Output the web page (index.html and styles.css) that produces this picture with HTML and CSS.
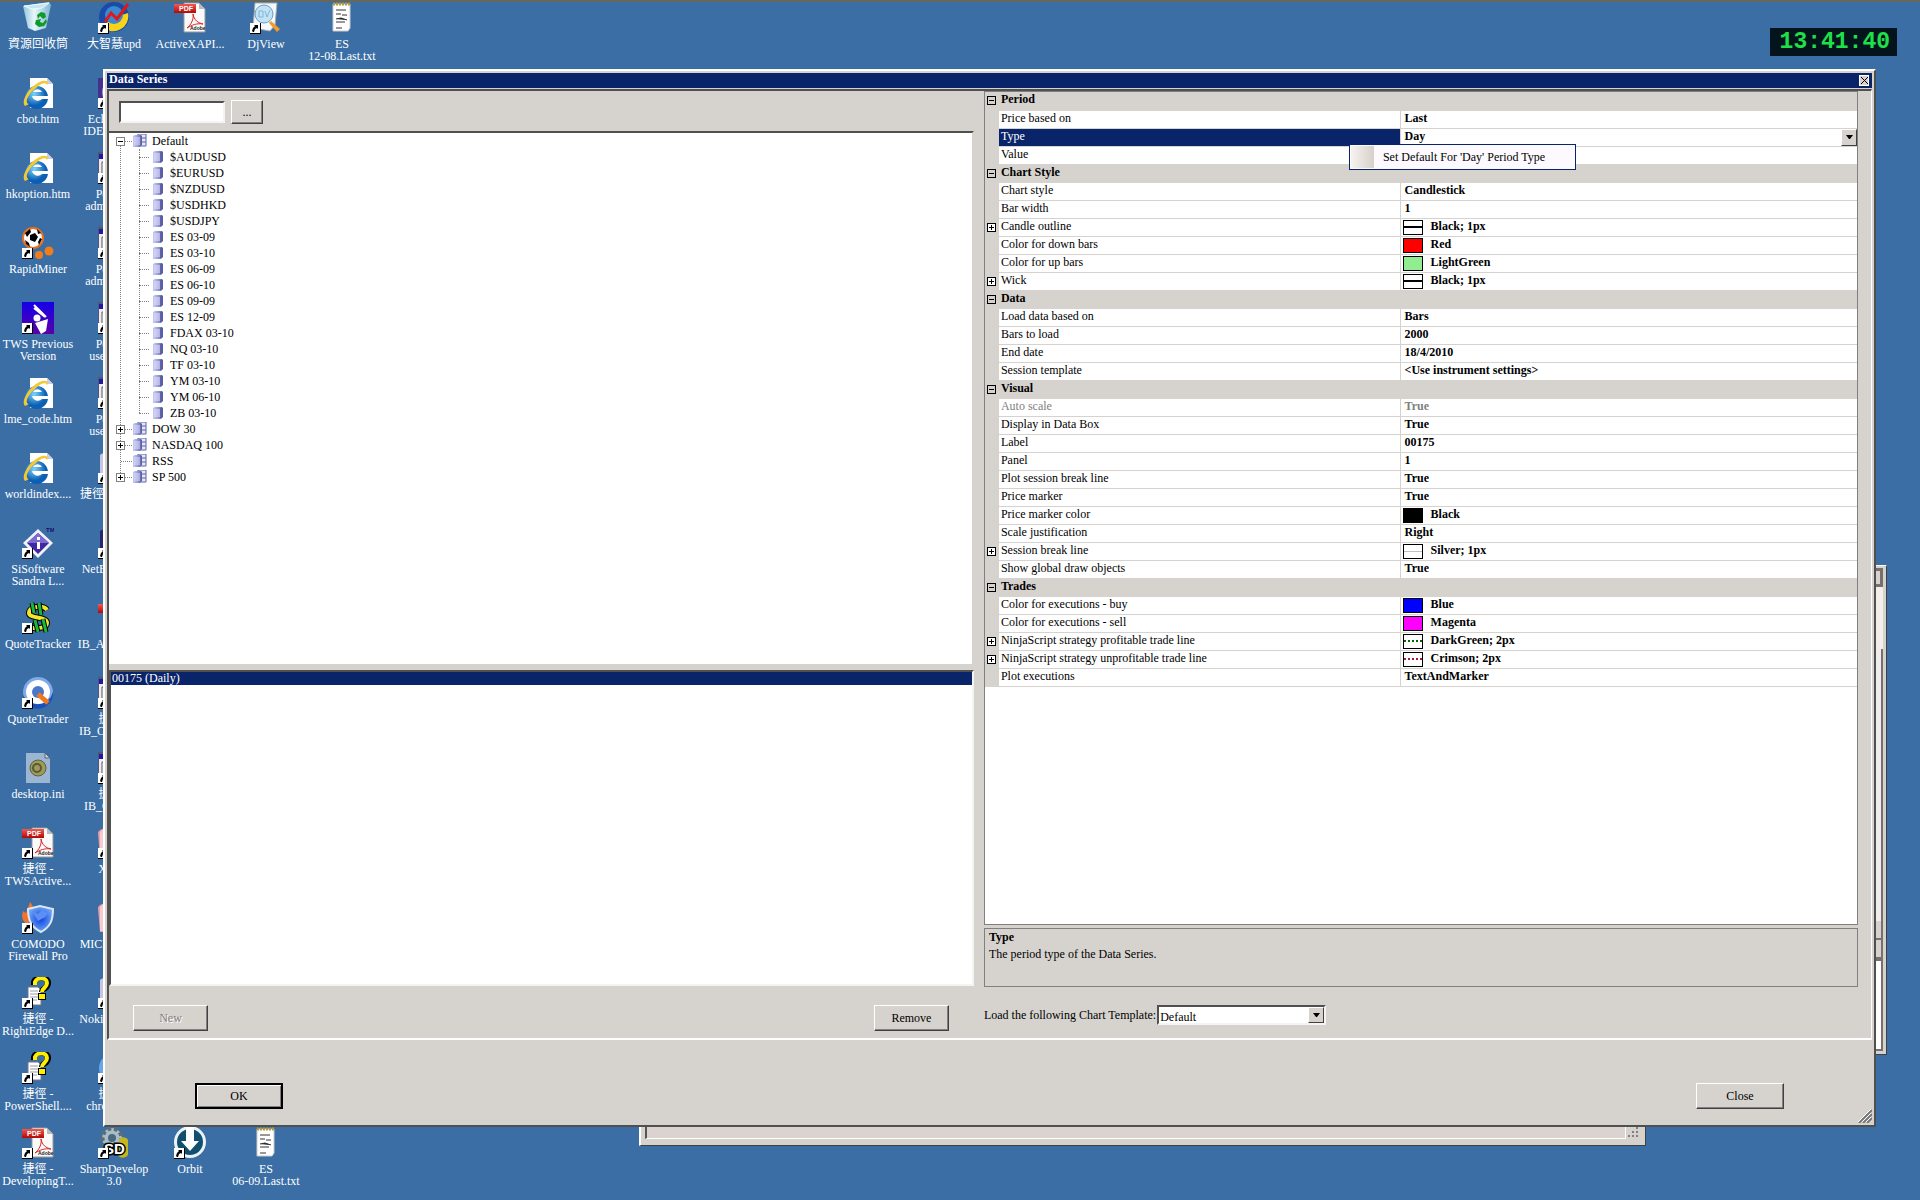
FILE: index.html
```html
<!DOCTYPE html>
<html lang="zh-Hant">
<head>
<meta charset="utf-8">
<title>Data Series</title>
<link rel="stylesheet" href="styles.css">
</head>
<body>
<svg class="defs" aria-hidden="true">
  <defs>
    <linearGradient id="gDb" x1="0" x2="1"><stop offset="0" stop-color="#c9cbf2"/><stop offset=".5" stop-color="#9a9edb"/><stop offset="1" stop-color="#5558a0"/></linearGradient>
    <linearGradient id="gRed" x1="0" x2="0" y1="0" y2="1"><stop offset="0" stop-color="#f05a50"/><stop offset="1" stop-color="#b00808"/></linearGradient>
    <radialGradient id="gIe" cx=".4" cy=".35"><stop offset="0" stop-color="#7fd4fb"/><stop offset="1" stop-color="#0b5fb4"/></radialGradient>
    <radialGradient id="gShield"><stop offset="0" stop-color="#1240e0"/><stop offset="1" stop-color="#6aa4f5"/></radialGradient>
    <linearGradient id="gBin" x1="0" x2="1"><stop offset="0" stop-color="#8fc4dc"/><stop offset=".4" stop-color="#e8f6fb"/><stop offset="1" stop-color="#7fb6d4"/></linearGradient>
    <linearGradient id="gTws" x1="0" x2="0" y1="0" y2="1"><stop offset="0" stop-color="#1400e8"/><stop offset="1" stop-color="#5a00a8"/></linearGradient>
  </defs>
  <symbol id="link" viewBox="0 0 11 11"><path d="M0 0h11v11H0z" fill="#000"/><path d="M0 0h10v10H0z" fill="#fff"/><path d="M4 2h4v4L7 5 5 6 4 9H3L2 8l1-3 2-2z" fill="#000"/></symbol>
  <symbol id="bin" viewBox="0 0 32 32"><path d="M1 4 27 0l2 3-5 23-11 3-7-3z" fill="url(#gBin)"/><path d="M2 4 27 1l-7 5-10 1z" fill="#c5e4ef" stroke="#eefaff"/><path d="m15 13 4-3 4 1 1 4-3 2-3-3-2 3zM14 18l5-1-1 3 3 1 3-4 1 3-3 4-5 1-4-3z" fill="#109a28"/></symbol>
  <symbol id="stock" viewBox="0 0 32 32"><circle cx="16" cy="15" r="15" fill="#1a4ba8"/><path d="M30 11a15 15 0 0 1-26 13l6-4 9-1 5-6z" fill="#f7d418"/><circle cx="16" cy="13" r="9" fill="#3a8ad0"/><path d="m7 20 6-9 6 6L30 2" fill="none" stroke="#e01818" stroke-width="3"/></symbol>
  <symbol id="pdf" viewBox="0 0 32 32"><path d="M10 1h15l6 6v23H10z" fill="#fafafa" stroke="#999"/><path d="M25 1v6h6z" fill="#bbb"/><path d="M13 26c4-3 7-9 6-14 1 6 5 9 10 10-6-1-11 1-16 4z" fill="none" stroke="#e02020"/><path d="M0 2h22v9H0z" fill="url(#gRed)"/><text x="5" y="9" class="icon-pdf">PDF</text><text x="16" y="28" class="icon-adobe">Adobe</text></symbol>
  <symbol id="djview" viewBox="0 0 32 32"><path d="M5 1h22l-2 22-5 6L3 26z" fill="#f4f7fb" stroke="#aaa"/><path d="m21 19 9 8-3 3-8-9z" fill="#f29c2a"/><circle cx="14" cy="12" r="9" fill="#c2e2f5" stroke="#6b9fc4"/><path d="M9 9h4v6H9zm6 0 2 6 3-7" fill="none" stroke="#86b4d8"/></symbol>
  <symbol id="note" viewBox="0 0 32 32"><path d="M7 2h17v24l-2 3H7z" fill="#fff" stroke="#ccc"/><path d="M7 2h17" stroke="#b39b38" stroke-width="3" stroke-dasharray="2 1"/><path d="M10 8h10M10 12h5m1 1h5M10 17l5-1 6 2M10 20h9M10 26h6" stroke="#333"/></symbol>
  <symbol id="ie" viewBox="0 0 32 32"><path d="M8 1h17l6 6v24H8z" fill="#fff"/><path d="M25 1v6h6z" fill="#ccd"/><path d="M26 19H10a6 6 0 0 0 10 3h6A11.500 11.500 0 1 1 26 19zm-6-4a5 5 0 0 0-9 0z" fill="url(#gIe)"/><path d="M3 29C-2 24 8 8 20 4c5-1 7 1 5 4-1-3-6-2-11 3C6 17 2 26 7 27z" fill="#f3c832"/></symbol>
  <symbol id="rapid" viewBox="0 0 32 32"><circle cx="11" cy="11" r="10" fill="#fff" stroke="#e8721a" stroke-width="2"/><path d="m8 8 5-2 3 4-3 5-5-2zM3 6l5-4 1 3-4 5zm12-4 4 4-3 1zm3 9 2 1-3 6-1-3zM3 13l4 3 1 4-4-3z" fill="#000"/><circle cx="27" cy="24" r="4.500" fill="#f07c1c"/><circle cx="17" cy="28" r="4" fill="#f07c1c"/></symbol>
  <symbol id="tws" viewBox="0 0 32 32"><path d="M0 0h32v32H0z" fill="url(#gTws)"/><path d="m12 3 12 12m-12-9 11 9" stroke="#fff" stroke-width="2"/><circle cx="15" cy="16" r="3.500" fill="#fff"/><path d="m13 21 13-4-2 12-5 3z" fill="#fff"/></symbol>
  <symbol id="sandra" viewBox="0 0 32 32"><path d="m16 2 15 14-15 15L1 16z" fill="#f3f0fa"/><path d="m16 6 11 10-11 11L5 16z" fill="#3d2aa0"/><path d="m16 6 11 10H5z" fill="#7a6cd0"/><path d="M15 10h3v3h-3zm0 5h3v7h-3z" fill="#fff"/><text x="24" y="5" class="icon-tm">TM</text></symbol>
  <symbol id="dollar" viewBox="0 0 32 32"><g fill="none"><path d="M25 8c-3-5-18-4-18 3 0 6 18 3 18 10 0 6-16 7-20 2" stroke="#000" stroke-width="6"/><path d="M25 8c-3-5-18-4-18 3 0 6 18 3 18 10 0 6-16 7-20 2" stroke="#f4e62a" stroke-width="4"/><path d="m10 1 2 10m5-10 2 12m-6 5 3 12m5-13 3 13" stroke="#000" stroke-width="5"/><path d="m10 1 2 10m5-10 2 12m-6 5 3 12m5-13 3 13" stroke="#18b83c" stroke-width="3"/></g></symbol>
  <symbol id="trader" viewBox="0 0 32 32"><circle cx="16" cy="15" r="15" fill="#7fa9e8"/><path d="M31 15a15 15 0 0 1-30 3 16 16 0 0 0 30-3z" fill="#1c4fb8"/><circle cx="16" cy="15" r="12" fill="#fff"/><circle cx="16" cy="15" r="6" fill="#4a78c8"/><path d="m16 17 10 9" stroke="#f07820" stroke-width="5"/></symbol>
  <symbol id="ini" viewBox="0 0 32 32"><path d="M4 1h19l5 5v25H4z" fill="#9cb5d2"/><path d="M23 1v5h5z" fill="#c8d6e8" stroke="#567"/><circle cx="16" cy="16" r="8" fill="#a09a58" stroke="#5e6040"/><circle cx="15" cy="16" r="4" fill="none" stroke="#555b38" stroke-width="2"/></symbol>
  <symbol id="shield" viewBox="0 0 32 32"><path d="M8 0c4 4 3 8 2 12l-4 11C-3 17 1 11 1 9l3 2z" fill="#f0742a"/><path d="m6 7 12-3 13 3c0 12-3 18-12 23C9 25 6 18 6 7z" fill="url(#gShield)" stroke="#dbe6f2" stroke-width="2"/><path d="m10 9 6 3 4-4 6 3-3 4-7 4z" fill="#5b8ff5"/></symbol>
  <symbol id="question" viewBox="0 0 32 32"><path d="M6 10h10l3 3v15H6z" fill="#fff" stroke="#778"/><path d="M8 14h8m-8 3h9m-9 3h9m-9 3h7" stroke="#99a"/><path d="M12 8V5c2-6 14-6 14 1 0 6-6 5-6 9" fill="none" stroke="#000" stroke-width="6"/><path d="M16 16h8v7h-8z" fill="#000"/><path d="M13 8V5c2-5 12-5 12 1 0 5-5 5-5 9" fill="none" stroke="#ffee00" stroke-width="4"/><path d="M17 17h6v5h-6z" fill="#ffee00"/></symbol>
  <symbol id="sharp" viewBox="0 0 32 32"><circle cx="14" cy="11" r="10" fill="#a9bcc8" stroke="#566d7c" stroke-width="5" stroke-dasharray="4 3"/><circle cx="14" cy="11" r="4" fill="#496a80"/><path d="M21 12c3-3 8-2 9 1v15c-3 4-9 3-10 0z" fill="#c6b51d"/><text x="6" y="27" class="icon-sd">SD</text></symbol>
  <symbol id="orbit" viewBox="0 0 32 32"><circle cx="16" cy="15" r="16" fill="#eaf3f7"/><circle cx="16" cy="15" r="13" fill="#10506e"/><path d="M12 0h8v14h5l-9 10-9-10h5z" fill="#fff"/></symbol>
  <symbol id="eclipse" viewBox="0 0 32 32"><path d="M0 1h32v29H0z" fill="#453090"/><circle cx="16" cy="15" r="12" fill="#a99adb"/></symbol>
  <symbol id="winapp" viewBox="0 0 32 32"><path d="M0 1h32v28H0z" fill="#eceaf2" stroke="#557" stroke-width="2"/><path d="M1 2h31v5H1z" fill="#1c1ca0"/><path d="M4 10h24v15H4z" fill="#fff" stroke="#555"/></symbol>
  <symbol id="netb" viewBox="0 0 32 32"><path d="m2 4 8-4h18v30H2z" fill="#26266e"/><path d="m6 8 8-3h12v18H6z" fill="#9cacd8"/></symbol>
  <symbol id="redapp" viewBox="0 0 32 32"><path d="M0 6c1-7 26-8 28 0v24H2z" fill="#e8a0a8"/><path d="M2 5c4-4 6-4 8-4v28H2z" fill="#f6ccd2"/></symbol>
  <symbol id="blueapp" viewBox="0 0 32 32"><circle cx="16" cy="16" r="15" fill="#69a8e8"/><circle cx="16" cy="16" r="6" fill="#d0e6fa"/></symbol>
  <symbol id="phone" viewBox="0 0 32 32"><path d="M2 3c3-4 22-4 25 0v26H2z" fill="#c6c6e2"/><path d="M5 6h18v18H5z" fill="#7878b0"/></symbol>
  <symbol id="db" viewBox="0 0 11 12"><path d="M1 1 3 0h7l1 1v9l-2 2H1z" fill="url(#gDb)"/><path d="M2 3h6M2 5h6M2 7h6M2 9h6" stroke="#e6e7fb"/><path d="M9 1v10" stroke="#4b4e94"/></symbol>
  <symbol id="dbs" viewBox="0 0 15 14"><path d="M6 0h8v12H6z" fill="#e4e5f8" stroke="#6064a8"/><path d="M10 4h4M10 8h4" stroke="#6064a8"/><path d="M1 2 3 1h6l1 1v9l-2 2H1z" fill="url(#gDb)"/><path d="M2 4h6M2 6h6M2 8h6M2 10h6" stroke="#dfe0fa"/></symbol>
  <symbol id="down" viewBox="0 0 7 4"><path d="M0 0h7L4 4H3z" fill="#000"/></symbol>
</svg>

<main class="desktop">
  <ul class="icons">
    <li class="icon c1"><svg class="pic"><use href="#bin"/></svg><span>資源回收筒</span></li>
    <li class="icon c1"><svg class="pic"><use href="#ie"/></svg><span>cbot.htm</span></li>
    <li class="icon c1"><svg class="pic"><use href="#ie"/></svg><span>hkoption.htm</span></li>
    <li class="icon c1"><svg class="pic"><use href="#rapid"/></svg><svg class="lnk"><use href="#link"/></svg><span>RapidMiner</span></li>
    <li class="icon c1"><svg class="pic"><use href="#tws"/></svg><svg class="lnk"><use href="#link"/></svg><span>TWS Previous<br>Version</span></li>
    <li class="icon c1"><svg class="pic"><use href="#ie"/></svg><span>lme_code.htm</span></li>
    <li class="icon c1"><svg class="pic"><use href="#ie"/></svg><span>worldindex....</span></li>
    <li class="icon c1"><svg class="pic"><use href="#sandra"/></svg><svg class="lnk"><use href="#link"/></svg><span>SiSoftware<br>Sandra L...</span></li>
    <li class="icon c1"><svg class="pic"><use href="#dollar"/></svg><svg class="lnk"><use href="#link"/></svg><span>QuoteTracker</span></li>
    <li class="icon c1"><svg class="pic"><use href="#trader"/></svg><svg class="lnk"><use href="#link"/></svg><span>QuoteTrader</span></li>
    <li class="icon c1"><svg class="pic"><use href="#ini"/></svg><span>desktop.ini</span></li>
    <li class="icon c1"><svg class="pic"><use href="#pdf"/></svg><svg class="lnk"><use href="#link"/></svg><span>捷徑 -<br>TWSActive...</span></li>
    <li class="icon c1"><svg class="pic"><use href="#shield"/></svg><svg class="lnk"><use href="#link"/></svg><span>COMODO<br>Firewall Pro</span></li>
    <li class="icon c1"><svg class="pic"><use href="#question"/></svg><svg class="lnk"><use href="#link"/></svg><span>捷徑 -<br>RightEdge D...</span></li>
    <li class="icon c1"><svg class="pic"><use href="#question"/></svg><svg class="lnk"><use href="#link"/></svg><span>捷徑 -<br>PowerShell....</span></li>
    <li class="icon c1"><svg class="pic"><use href="#pdf"/></svg><svg class="lnk"><use href="#link"/></svg><span>捷徑 -<br>DevelopingT...</span></li>

    <li class="icon c2"><svg class="pic"><use href="#stock"/></svg><svg class="lnk"><use href="#link"/></svg><span>大智慧upd</span></li>
    <li class="icon c2"><svg class="pic"><use href="#eclipse"/></svg><svg class="lnk"><use href="#link"/></svg><span>Eclipse for<br>IDE for Java</span></li>
    <li class="icon c2"><svg class="pic"><use href="#winapp"/></svg><svg class="lnk"><use href="#link"/></svg><span>Permits<br>admin users</span></li>
    <li class="icon c2"><svg class="pic"><use href="#winapp"/></svg><svg class="lnk"><use href="#link"/></svg><span>Permits<br>admin users</span></li>
    <li class="icon c2"><svg class="pic"><use href="#winapp"/></svg><svg class="lnk"><use href="#link"/></svg><span>Permits<br>user mode</span></li>
    <li class="icon c2"><svg class="pic"><use href="#winapp"/></svg><svg class="lnk"><use href="#link"/></svg><span>Permits<br>user mode</span></li>
    <li class="icon c2"><svg class="pic"><use href="#phone"/></svg><svg class="lnk"><use href="#link"/></svg><span>捷徑 - Python</span></li>
    <li class="icon c2"><svg class="pic"><use href="#netb"/></svg><svg class="lnk"><use href="#link"/></svg><span>NetBeans 6.8</span></li>
    <li class="icon c2"><svg class="pic"><use href="#pdf"/></svg><span>IB_API_Guide</span></li>
    <li class="icon c2"><svg class="pic"><use href="#winapp"/></svg><svg class="lnk"><use href="#link"/></svg><span>捷徑 -<br>IB_OptionList</span></li>
    <li class="icon c2"><svg class="pic"><use href="#winapp"/></svg><svg class="lnk"><use href="#link"/></svg><span>捷徑 -<br>IB_Charting</span></li>
    <li class="icon c2"><svg class="pic"><use href="#redapp"/></svg><svg class="lnk"><use href="#link"/></svg><span>XPads</span></li>
    <li class="icon c2"><svg class="pic"><use href="#redapp"/></svg><span>MICROSOFT</span></li>
    <li class="icon c2"><svg class="pic"><use href="#phone"/></svg><svg class="lnk"><use href="#link"/></svg><span>Nokia PC Suit<br>7.1</span></li>
    <li class="icon c2"><svg class="pic"><use href="#blueapp"/></svg><svg class="lnk"><use href="#link"/></svg><span>捷徑 -<br>chrome.exe</span></li>
    <li class="icon c2"><svg class="pic"><use href="#sharp"/></svg><svg class="lnk"><use href="#link"/></svg><span>SharpDevelop<br>3.0</span></li>

    <li class="icon c3"><svg class="pic"><use href="#pdf"/></svg><span>ActiveXAPI...</span></li>
    <li class="icon c3 last"><svg class="pic"><use href="#orbit"/></svg><svg class="lnk"><use href="#link"/></svg><span>Orbit</span></li>
    <li class="icon c4"><svg class="pic"><use href="#djview"/></svg><svg class="lnk"><use href="#link"/></svg><span>DjView</span></li>
    <li class="icon c4 last"><svg class="pic"><use href="#note"/></svg><span>ES<br>06-09.Last.txt</span></li>
    <li class="icon c5"><svg class="pic"><use href="#note"/></svg><span>ES<br>12-08.Last.txt</span></li>
  </ul>

  <time class="clock">13:41:40</time>

  <div class="behind behind-right"><div class="bk-head"></div><div class="bk-mid"></div><div class="bk-track"></div><div class="bk-btn"></div><div class="bk-btn"></div><div class="bk-page"></div></div>
  <div class="behind behind-bottom"><div class="bk-status"></div><svg class="dots" viewBox="0 0 12 12"><path d="M8 0h2v2H8zM4 4h2v2H4zm4 0h2v2H8zM0 8h2v2H0zm4 0h2v2H4zm4 0h2v2H8z" fill="#808080"/></svg></div>

  <section class="dialog" aria-label="Data Series">
    <header class="titlebar"><h1>Data Series</h1><button class="close-x" aria-label="Close window"><svg viewBox="0 0 7 7"><path d="m0 0 7 7M7 0 0 7" stroke="#000"/></svg></button></header>

    <div class="panel">
      <div class="left">
        <div class="search"><input type="text" class="field" aria-label="Instrument"><button class="btn browse">...</button></div>
        <div class="tree">
          <ul class="roots">
            <li><div class="node"><button class="exp minus" aria-label="Collapse"></button><svg class="dbs"><use href="#dbs"/></svg>Default</div>
              <ul class="kids">
                <li><svg class="db"><use href="#db"/></svg>$AUDUSD</li>
                <li><svg class="db"><use href="#db"/></svg>$EURUSD</li>
                <li><svg class="db"><use href="#db"/></svg>$NZDUSD</li>
                <li><svg class="db"><use href="#db"/></svg>$USDHKD</li>
                <li><svg class="db"><use href="#db"/></svg>$USDJPY</li>
                <li><svg class="db"><use href="#db"/></svg>ES 03-09</li>
                <li><svg class="db"><use href="#db"/></svg>ES 03-10</li>
                <li><svg class="db"><use href="#db"/></svg>ES 06-09</li>
                <li><svg class="db"><use href="#db"/></svg>ES 06-10</li>
                <li><svg class="db"><use href="#db"/></svg>ES 09-09</li>
                <li><svg class="db"><use href="#db"/></svg>ES 12-09</li>
                <li><svg class="db"><use href="#db"/></svg>FDAX 03-10</li>
                <li><svg class="db"><use href="#db"/></svg>NQ 03-10</li>
                <li><svg class="db"><use href="#db"/></svg>TF 03-10</li>
                <li><svg class="db"><use href="#db"/></svg>YM 03-10</li>
                <li><svg class="db"><use href="#db"/></svg>YM 06-10</li>
                <li><svg class="db"><use href="#db"/></svg>ZB 03-10</li>
              </ul>
            </li>
            <li><div class="node"><button class="exp plus" aria-label="Expand"></button><svg class="dbs"><use href="#dbs"/></svg>DOW 30</div></li>
            <li><div class="node"><button class="exp plus" aria-label="Expand"></button><svg class="dbs"><use href="#dbs"/></svg>NASDAQ 100</div></li>
            <li><div class="node"><i class="exp-none"></i><svg class="dbs"><use href="#dbs"/></svg>RSS</div></li>
            <li><div class="node"><button class="exp plus" aria-label="Expand"></button><svg class="dbs"><use href="#dbs"/></svg>SP 500</div></li>
          </ul>
        </div>
        <ul class="series"><li>00175 (Daily)</li></ul>
        <div class="left-actions"><button class="btn action" disabled>New</button><button class="btn action">Remove</button></div>
      </div>

      <div class="right">
        <div class="grid-box">
          <table class="props">
            <colgroup><col class="col-gutter"><col class="col-name"><col></colgroup>
            <tbody>
            <tr class="cat"><td><button class="box minus" aria-label="Collapse"></button></td><th colspan="2">Period</th></tr>
            <tr><td></td><th>Price based on</th><td>Last</td></tr>
            <tr class="sel"><td></td><th>Type</th><td>Day<button class="drop" aria-label="Choose type"><svg><use href="#down"/></svg></button></td></tr>
            <tr><td></td><th>Value</th><td></td></tr>
            <tr class="cat"><td><button class="box minus" aria-label="Collapse"></button></td><th colspan="2">Chart Style</th></tr>
            <tr><td></td><th>Chart style</th><td>Candlestick</td></tr>
            <tr><td></td><th>Bar width</th><td>1</td></tr>
            <tr><td><button class="box plus" aria-label="Expand"></button></td><th>Candle outline</th><td><i class="sw line"></i>Black; 1px</td></tr>
            <tr><td></td><th>Color for down bars</th><td><i class="sw red"></i>Red</td></tr>
            <tr><td></td><th>Color for up bars</th><td><i class="sw lightgreen"></i>LightGreen</td></tr>
            <tr><td><button class="box plus" aria-label="Expand"></button></td><th>Wick</th><td><i class="sw line"></i>Black; 1px</td></tr>
            <tr class="cat"><td><button class="box minus" aria-label="Collapse"></button></td><th colspan="2">Data</th></tr>
            <tr><td></td><th>Load data based on</th><td>Bars</td></tr>
            <tr><td></td><th>Bars to load</th><td>2000</td></tr>
            <tr><td></td><th>End date</th><td>18/4/2010</td></tr>
            <tr><td></td><th>Session template</th><td>&lt;Use instrument settings&gt;</td></tr>
            <tr class="cat"><td><button class="box minus" aria-label="Collapse"></button></td><th colspan="2">Visual</th></tr>
            <tr class="off"><td></td><th>Auto scale</th><td>True</td></tr>
            <tr><td></td><th>Display in Data Box</th><td>True</td></tr>
            <tr><td></td><th>Label</th><td>00175</td></tr>
            <tr><td></td><th>Panel</th><td>1</td></tr>
            <tr><td></td><th>Plot session break line</th><td>True</td></tr>
            <tr><td></td><th>Price marker</th><td>True</td></tr>
            <tr><td></td><th>Price marker color</th><td><i class="sw black"></i>Black</td></tr>
            <tr><td></td><th>Scale justification</th><td>Right</td></tr>
            <tr><td><button class="box plus" aria-label="Expand"></button></td><th>Session break line</th><td><i class="sw line silver"></i>Silver; 1px</td></tr>
            <tr><td></td><th>Show global draw objects</th><td>True</td></tr>
            <tr class="cat"><td><button class="box minus" aria-label="Collapse"></button></td><th colspan="2">Trades</th></tr>
            <tr><td></td><th>Color for executions - buy</th><td><i class="sw blue"></i>Blue</td></tr>
            <tr><td></td><th>Color for executions - sell</th><td><i class="sw magenta"></i>Magenta</td></tr>
            <tr><td><button class="box plus" aria-label="Expand"></button></td><th>NinjaScript strategy profitable trade line</th><td><i class="sw dots-green"></i>DarkGreen; 2px</td></tr>
            <tr><td><button class="box plus" aria-label="Expand"></button></td><th>NinjaScript strategy unprofitable trade line</th><td><i class="sw dots-red"></i>Crimson; 2px</td></tr>
            <tr><td></td><th>Plot executions</th><td>TextAndMarker</td></tr>
            </tbody>
          </table>
          <div class="menu" role="menu"><button role="menuitem">Set Default For 'Day' Period Type</button></div>
        </div>
        <div class="help"><b>Type</b><p>The period type of the Data Series.</p></div>
        <div class="template"><label for="tpl">Load the following Chart Template:</label>
          <span class="combo"><select id="tpl"><option>Default</option></select><i class="combo-arrow"><svg><use href="#down"/></svg></i></span>
        </div>
      </div>
    </div>

    <footer class="footer"><button class="btn main default">OK</button><button class="btn main">Close</button>
      <svg class="grip" viewBox="0 0 14 14"><path d="M1 14 14 1M5 14l9-9M9 14l5-5" stroke="#777" stroke-width="2"/><path d="M0 13 13 0M4 13l9-9M8 13l5-5" stroke="#fff"/></svg>
    </footer>
  </section>
</main>
</body>
</html>
```
FILE: styles.css
```css
* { box-sizing: border-box; }

body {
  margin: 0;
  background: #3a6ea5;
  color: #000;
  font: 12px/16px "Liberation Serif", "Noto Sans CJK TC", serif;
}

ul { list-style: none; margin: 0; padding: 0; }
h1, p { margin: 0; font-size: 12px; }
button, input, select { font: inherit; color: inherit; padding: 0; margin: 0; border-radius: 0; }
svg { display: block; }
.defs { position: absolute; width: 0; height: 0; }

/* Desktop */
.desktop {
  position: relative;
  min-height: 100vh;
  overflow: hidden;
  border-top: 2px solid #66685f;
}

.icons {
  display: grid;
  grid-template-columns: repeat(5, 76px);
  grid-template-rows: repeat(16, 75px);
  grid-auto-flow: column dense;
  height: 1198px;
}
.icon {
  position: relative;
  display: flex;
  flex-direction: column;
  align-items: center;
  gap: 4px;
  color: #fff;
  line-height: 12px;
  text-align: center;
  white-space: nowrap;
}
.c1 { grid-column: 1; }
.c2 { grid-column: 2; }
.c3 { grid-column: 3; }
.c4 { grid-column: 4; }
.c5 { grid-column: 5; }
.icon.last { grid-row: 16; }
.pic { width: 32px; height: 32px; flex: none; overflow: visible; }
.lnk { position: absolute; left: 22px; top: 21px; width: 11px; height: 11px; }
.icon-pdf { font: bold 7px "Liberation Sans", sans-serif; fill: #fff; }
.icon-adobe { font: bold 5px "Liberation Sans", sans-serif; fill: #222; }
.icon-tm { font: bold 6px "Liberation Sans", sans-serif; fill: #14146e; }
.icon-sd { font: bold 15px "Liberation Sans", sans-serif; fill: #fff; stroke: #000; stroke-width: 3px; paint-order: stroke; }

.clock {
  position: absolute;
  top: 26px;
  right: 23px;
  padding: 0 7px 0 10px;
  background: #04141c;
  color: #1fe04a;
  font: bold 23px/28px "Liberation Mono", monospace;
}

/* Windows lying under the dialog */
.behind {
  position: absolute;
  background: #d6d3ce;
  border: 1px solid #404040;
  display: flex;
}
.behind-right {
  top: 563px;
  bottom: 145px;
  right: 33px;
  width: 40px;
  flex-direction: column;
  padding: 2px 3px 3px 0;
  border-top-color: #fff;
}
.bk-head { height: 19px; background: #d6d3ce; border: 3px solid #77706c; border-left: 0; }
.bk-mid { height: 62px; background: #f4eeea; }
.bk-track { flex: 1; background: #f0eeec; border-right: 2px solid #77706c; }
.bk-btn { height: 19px; border-right: 2px solid #77706c; border-bottom: 2px solid #77706c; }
.bk-page { height: 92px; background: #fff; border: 2px solid #77706c; }
.behind-bottom {
  bottom: 54px;
  left: 639px;
  width: 1007px;
  height: 40px;
  padding: 0 5px 6px 4px;
  border-left: 2px solid #fff;
  align-items: flex-end;
  gap: 2px;
}
.bk-status { flex: 1; height: 32px; background: #dad3d0; border: 1px solid #fff; border-left: 2px solid #555; }
.dots { width: 12px; height: 12px; }

/* Dialog */
.dialog {
  position: absolute;
  top: 67px;
  right: 44px;
  bottom: 73px;
  left: 103px;
  display: flex;
  flex-direction: column;
  padding: 2px;
  background: #d6d3ce;
  border: 2px solid;
  border-color: #fff #505050 #505050 #fff;
}
.titlebar {
  display: flex;
  align-items: center;
  justify-content: space-between;
  height: 15px;
  padding: 0 3px 0 2px;
  background: #0a246a;
  color: #fff;
}
.titlebar h1 { line-height: 13px; padding-bottom: 2px; }
.close-x {
  display: grid;
  place-items: center;
  width: 10px;
  height: 11px;
  background: #d6d3ce;
  border: 1px solid #fff;
}
.close-x svg { width: 7px; height: 7px; }

.panel {
  flex: 1;
  min-height: 0;
  display: grid;
  grid-template-columns: minmax(0, 39fr) minmax(0, 40fr);
  gap: 10px;
  margin-top: 1px;
  border: 2px solid;
  border-color: #505050 #fff #fff #505050;
  border-right-width: 1px;
}
.left { display: flex; flex-direction: column; min-height: 0; }
.search { display: flex; align-items: center; gap: 6px; height: 40px; flex: none; padding: 2px 10px 0; }
.field {
  width: 106px;
  height: 22px;
  background: #fff;
  border: 2px solid;
  border-color: #505050 #f4f4f4 #f4f4f4 #505050;
}
.btn {
  background: #d6d3ce;
  border: 1px solid;
  border-color: #fff #404040 #404040 #fff;
  box-shadow: inset -1px -1px #808080;
}
.browse { width: 32px; height: 24px; }

.tree {
  flex: 17 1 0;
  min-height: 0;
  overflow: hidden;
  background: #fff;
  border: 2px solid;
  border-color: #505050 #d6d3ce #d6d3ce #808080;
  border-left: 0;
  border-bottom-width: 1px;
}
.roots { position: relative; padding-left: 7px; }
.roots::before {
  content: "";
  position: absolute;
  left: 11px;
  top: 8px;
  bottom: 8px;
  border-left: 1px dotted #808080;
}
.node { position: relative; display: flex; align-items: center; height: 16px; }
.node::before {
  content: "";
  position: absolute;
  left: 5px;
  top: 8px;
  width: 11px;
  border-top: 1px dotted #808080;
}
.dbs { width: 15px; height: 14px; margin: 0 5px 0 7px; }
.exp, .exp-none { position: relative; width: 9px; height: 9px; flex: none; }
.exp, .box {
  background:
    linear-gradient(#000, #000) center / 5px 1px no-repeat #fff;
  border: 1px solid #808080;
}
.exp.plus, .box.plus {
  background:
    linear-gradient(#000, #000) center / 5px 1px no-repeat,
    linear-gradient(#000, #000) center / 1px 5px no-repeat #fff;
}
.kids { position: relative; padding-left: 36px; }
.kids::before {
  content: "";
  position: absolute;
  left: 23px;
  top: 0;
  bottom: 8px;
  border-left: 1px dotted #808080;
}
.kids li { position: relative; display: flex; align-items: center; height: 16px; }
.kids li::before {
  content: "";
  position: absolute;
  left: -13px;
  top: 8px;
  width: 10px;
  border-top: 1px dotted #808080;
}
.db { width: 11px; height: 12px; margin-right: 7px; }

.series {
  flex: 10 1 0;
  min-height: 0;
  margin-top: 5px;
  background: #fff;
  border: 2px solid;
  border-color: #505050 #f4f4f4 #f4f4f4 #505050;
}
.series li { padding-left: 1px; background: #0a246a; color: #fff; line-height: 13px; }
.left-actions {
  display: flex;
  flex: none;
  justify-content: space-between;
  align-items: flex-start;
  height: 52px;
  padding: 19px 25px 0 24px;
}
.action { width: 75px; height: 26px; }
.btn:disabled { color: #808080; text-shadow: 1px 1px #fff; }

.right { display: flex; flex-direction: column; min-height: 0; padding-right: 13px; }
.grid-box { position: relative; flex: 1; min-height: 0; background: #fff; border: 1px solid #808080; }
.props { width: 100%; table-layout: fixed; border-collapse: collapse; border-spacing: 0; line-height: 14px; }
.col-gutter { width: 14px; }
.col-name { width: 46%; }
.props td, .props th {
  height: 18px;
  padding: 0 2px 3px;
  border-bottom: 1px solid #d6d3ce;
  text-align: left;
  font-weight: normal;
  white-space: nowrap;
  overflow: hidden;
}
.props td:last-child { position: relative; font-weight: bold; border-left: 1px solid #d6d3ce; padding-left: 4px; }
.props td:first-child { padding: 0 2px; background: #d6d3ce; }
.props .cat th { background: #d6d3ce; font-weight: bold; }
.props .sel th { background: #0a246a; color: #fff; }
.props .off { color: #808080; }
.box { display: block; width: 9px; height: 9px; border-color: #000; background-color: #d6d3ce; }
.drop {
  position: absolute;
  top: 0;
  right: 0;
  display: grid;
  place-items: center;
  width: 16px;
  height: 17px;
  background: #d6d3ce;
  border: 1px solid;
  border-color: #fff #404040 #404040 #fff;
}
.drop svg, .combo-arrow svg { width: 7px; height: 4px; }

.sw {
  position: relative;
  float: left;
  width: 20px;
  height: 15px;
  margin: 1px 8px -2px -2px;
  border: 1px solid #000;
  background: #fff;
}
.line { background: linear-gradient(#000, #000) center / 100% 2px no-repeat #fff; }
.line.silver { background: linear-gradient(#c0c0c0, #c0c0c0) center / 100% 1px no-repeat #fff; }
.red { background: #f00; }
.lightgreen { background: #90ee90; }
.black { background: #000; }
.blue { background: #00f; }
.magenta { background: #f0f; }
.dots-green { background: repeating-linear-gradient(90deg, #006400 0 2px, #fff 2px 4px) center / 100% 2px no-repeat #fff; }
.dots-red { background: repeating-linear-gradient(90deg, #b0143c 0 2px, #fff 2px 4px) center / 100% 2px no-repeat #fff; }

.menu {
  position: absolute;
  top: 52px;
  left: 364px;
  width: 227px;
  height: 26px;
  padding: 1px;
  background: linear-gradient(90deg, #f6f4f1, #d6d0c8) 1px 1px / 23px 22px no-repeat #fcfaff;
  border: 1px solid #0a246a;
}
.menu button { width: 100%; height: 22px; padding-left: 32px; border: 0; background: none; text-align: left; }

.help { flex: none; height: 59px; margin-top: 3px; padding: 0 4px; border: 1px solid #808080; }
.help p { line-height: 18px; }
.template { display: flex; flex: none; align-items: flex-start; gap: 1px; height: 51px; padding: 18px 0 0 0; line-height: 20px; }
.combo { position: relative; }
.combo select {
  display: block;
  width: 169px;
  height: 20px;
  padding: 0 18px 2px 1px;
  appearance: none;
  background: #fff;
  border: 2px solid;
  border-color: #505050 #f4f4f4 #f4f4f4 #505050;
  outline: 0;
}
.combo-arrow {
  position: absolute;
  top: 2px;
  right: 2px;
  display: grid;
  place-items: center;
  width: 16px;
  height: 16px;
  background: #d6d3ce;
  border: 1px solid;
  border-color: #fff #404040 #404040 #fff;
  pointer-events: none;
}

.footer {
  position: relative;
  flex: none;
  display: flex;
  justify-content: space-between;
  align-items: center;
  height: 83px;
  padding: 31px 88px 0 88px;
}
.main { width: 88px; height: 26px; margin-bottom: 2px; }
.default { border: 2px solid; border-color: #000; box-shadow: inset 1px 1px #fff, inset -1px -1px #808080; }
.grip { position: absolute; right: 0; bottom: 0; width: 14px; height: 14px; }
```
